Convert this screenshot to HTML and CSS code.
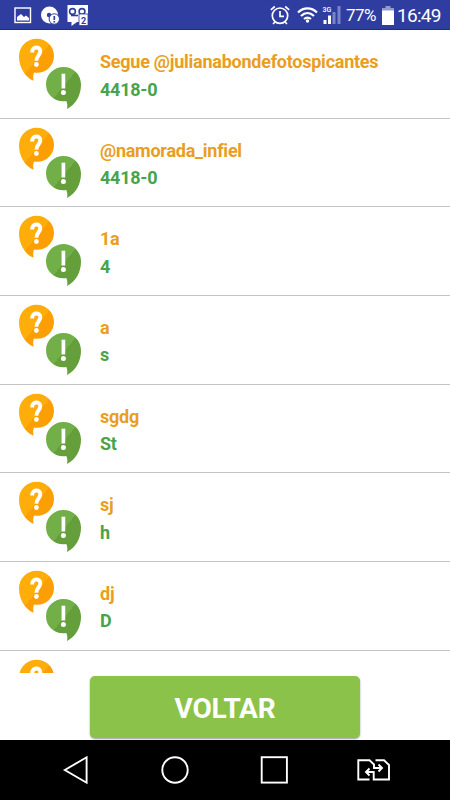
FILE: index.html
```html
<!DOCTYPE html>
<html lang="pt-BR">
<head>
<meta charset="utf-8">
<meta name="viewport" content="width=device-width">
<title>Perguntas e respostas</title>
<link rel="stylesheet" href="styles.css">
</head>
<body>
<svg class="defs" aria-hidden="true">
  <linearGradient id="orange" x1="0" y1="0" x2="1" y2="1">
    <stop offset="0.5" stop-color="#ffad0b"/><stop offset="0.5" stop-color="#fc9f05"/>
  </linearGradient>
  <linearGradient id="green" x1="0" y1="0" x2="1" y2="1">
    <stop offset="0.48" stop-color="#72af48"/><stop offset="0.48" stop-color="#659f3c"/>
  </linearGradient>
  <symbol id="qa" viewBox="18 38 64 72">
    <path fill="url(#orange)" d="M36.500 38.700C46.300 38.700 54 46.300 54 55.700C54 66 45.500 74.300 34 72.600C33 75 33 77.500 33.600 80.700C25 77.500 19 67 19 56.500C19 46.500 26.700 38.700 36.500 38.700Z"/>
    <path fill="url(#green)" d="M63.500 67C73.300 67 81 74.600 81 84.500C81 95 76 104.500 67 108.900C67.600 106 67.500 103.500 66.300 101C54.500 102.500 46 94.500 46 84.200C46 74.600 53.800 67 63.500 67Z"/>
    <path fill="none" stroke="#fff" stroke-width="3.900" d="M32.200 52.500C31.800 46 40.300 46 40.300 51.300C40.300 55.400 36.400 55.600 36.400 60.700"/>
    <circle cx="36.400" cy="64.500" r="2.400" fill="#fff"/>
    <path stroke="#fff" stroke-width="3.700" d="M63.400 73.700V88.500"/>
    <circle cx="63.400" cy="92.600" r="2.500" fill="#fff"/>
  </symbol>
</svg>
<div class="screen">
  <header class="status">
    <svg class="notices" width="80" height="24" viewBox="10 3 80 24">
      <rect x="15" y="8" width="15.500" height="14.500" fill="none" stroke="#fff" stroke-width="1.400"/>
      <path fill="#fff" d="M17 20.500V17L21 14L24 17L26 15.500L29 18V20.500Z"/>
      <circle cx="49.500" cy="15" r="8.500" fill="#fff"/>
      <circle cx="49" cy="15" r="2.200" fill="#303da0"/>
      <circle cx="54.300" cy="19" r="5.200" fill="#fff" stroke="#303da0"/>
      <path stroke="#303da0" stroke-width="1.700" d="M54.300 16V20M54.300 21V22.500"/>
      <path fill="#fff" d="M67.500 5H88V22H77L71.500 26V22H67.500Z"/>
      <g fill="none" stroke="#303da0" stroke-width="1.600"><circle cx="72.500" cy="11.500" r="2.900"/><circle cx="82" cy="11.500" r="2.900"/><path d="M71 15.500H78"/></g>
      <rect x="79" y="14" width="9" height="11.500" fill="#fff" stroke="#303da0" stroke-width=".8"/>
      <text class="count" x="81" y="23.500">2</text>
    </svg>
    <div class="signals">
      <svg width="74" height="24" viewBox="270 3 74 24">
        <g fill="none" stroke="#fff" stroke-width="1.700">
          <circle cx="280" cy="15.700" r="7.700"/><path d="M280 11V16.300H284M270.800 9.800L274.800 6.500M285.200 6.500L289.200 9.800M275 22L273 24M285 22L287 24"/>
        </g>
        <g fill="none" stroke="#fff" stroke-width="2.200"><path d="M298 12.500C303.500 7 311.500 7 317 12.500M301 16C305 12 310 12 314 16M304 19C306.500 17 308.500 17 311 19"/></g>
        <circle cx="307.500" cy="21" r="1.700" fill="#fff"/>
        <text class="network" x="322.500" y="12">3G</text>
        <path fill="#fff" d="M323.500 20H326.500V24H323.500ZM328 15.500H331V24H328Z"/>
        <path fill="#7983c8" d="M332.500 12H335.500V24H332.500ZM337.500 6H340.500V24H337.500Z"/>
      </svg>
      <span class="percent">77%</span>
      <svg class="battery" width="12" height="19" viewBox="0 0 12 19"><path fill="#9299cf" d="M3.500 0H8.500V2H12V5H0V2H3.500Z"/><path fill="#fff" d="M0 4.500H12V19H0Z"/></svg>
      <time class="clock">16:49</time>
    </div>
  </header>
  <main class="list">
    <article class="row"><svg class="qa"><use href="#qa"/></svg><div><p class="question">Segue @julianabondefotospicantes</p><p class="answer">4418-0</p></div></article>
    <article class="row"><svg class="qa"><use href="#qa"/></svg><div><p class="question">@namorada_infiel</p><p class="answer">4418-0</p></div></article>
    <article class="row"><svg class="qa"><use href="#qa"/></svg><div><p class="question">1a</p><p class="answer">4</p></div></article>
    <article class="row"><svg class="qa"><use href="#qa"/></svg><div><p class="question">a</p><p class="answer">s</p></div></article>
    <article class="row"><svg class="qa"><use href="#qa"/></svg><div><p class="question">sgdg</p><p class="answer">St</p></div></article>
    <article class="row"><svg class="qa"><use href="#qa"/></svg><div><p class="question">sj</p><p class="answer">h</p></div></article>
    <article class="row"><svg class="qa"><use href="#qa"/></svg><div><p class="question">dj</p><p class="answer">D</p></div></article>
    <article class="row"><svg class="qa"><use href="#qa"/></svg></article>
  </main>
  <footer class="actions"><button class="back">VOLTAR</button></footer>
  <nav class="navbar">
    <svg width="450" height="60" viewBox="0 740 450 60" fill="none" stroke="#fff" stroke-width="1.900">
      <path d="M64.800 770L86.600 757.300V782.700Z"/>
      <circle cx="175" cy="770" r="12.700"/>
      <rect x="261.700" y="757.200" width="25.200" height="25.400"/>
      <path d="M369.500 779.500H358.300V760.200H369.500L374 764.500V768H382M378.500 764.500L382 768L378.500 771.500M375.500 760.200H384L389 765V779.500H373.700V772H366M369.500 768.500L366 772L369.500 775.500"/>
    </svg>
  </nav>
</div>
</body>
</html>
```

FILE: styles.css
```css
* {
  box-sizing: border-box;
}

body,
p {
  margin: 0;
}

body {
  font-family: Roboto, sans-serif;
  background: #fff;
}

svg {
  display: block;
  flex: none;
}

.defs {
  position: absolute;
  width: 0;
  height: 0;
}

.screen {
  display: flex;
  flex-direction: column;
  width: 450px;
  height: 800px;
  overflow: hidden;
}

.status {
  display: flex;
  justify-content: space-between;
  flex: none;
  height: 30px;
  padding: 3px 9px 0 10px;
  background: #303da0;
  border-bottom: 1px solid #202b87;
  color: #fff;
}

.signals {
  display: flex;
}

.percent {
  width: 31px;
  margin-left: 2px;
  font-size: 17px;
  line-height: 25px;
  letter-spacing: -0.5px;
}

.battery {
  margin: 3px 3px 0 5px;
}

.clock {
  width: 44px;
  font-size: 19px;
  line-height: 25px;
  letter-spacing: -0.7px;
  white-space: nowrap;
}

.network {
  fill: #fff;
  font-size: 7px;
  font-weight: 500;
}

.count {
  fill: #303da0;
  font-size: 9px;
  font-weight: 700;
}

.list {
  flex: none;
  height: 643px;
  overflow: hidden;
}

.row {
  display: flex;
  height: 88.670px;
  padding: 8px 18px 0;
  border-bottom: 1px solid #c4c4c4;
}

.qa {
  width: 64px;
  height: 72px;
  margin-right: 18px;
}

.question,
.answer {
  font-size: 18px;
  font-weight: 700;
  line-height: 27.500px;
  letter-spacing: -0.25px;
  white-space: nowrap;
}

.question {
  margin-top: 10px;
  color: #e99e20;
}

.answer {
  color: #48a44c;
}

.actions {
  display: flex;
  justify-content: center;
  flex: none;
  height: 67px;
  padding-top: 3px;
}

.back {
  width: 270px;
  height: 62px;
  padding: 2px 0 0;
  border: 0;
  border-radius: 5px;
  background: #8bc34a;
  box-shadow: 0 1px 2px #0006;
  color: #fff;
  font: 700 28px Roboto, sans-serif;
  letter-spacing: -0.2px;
}

.navbar {
  flex: none;
  height: 60px;
  background: #000;
}
```
